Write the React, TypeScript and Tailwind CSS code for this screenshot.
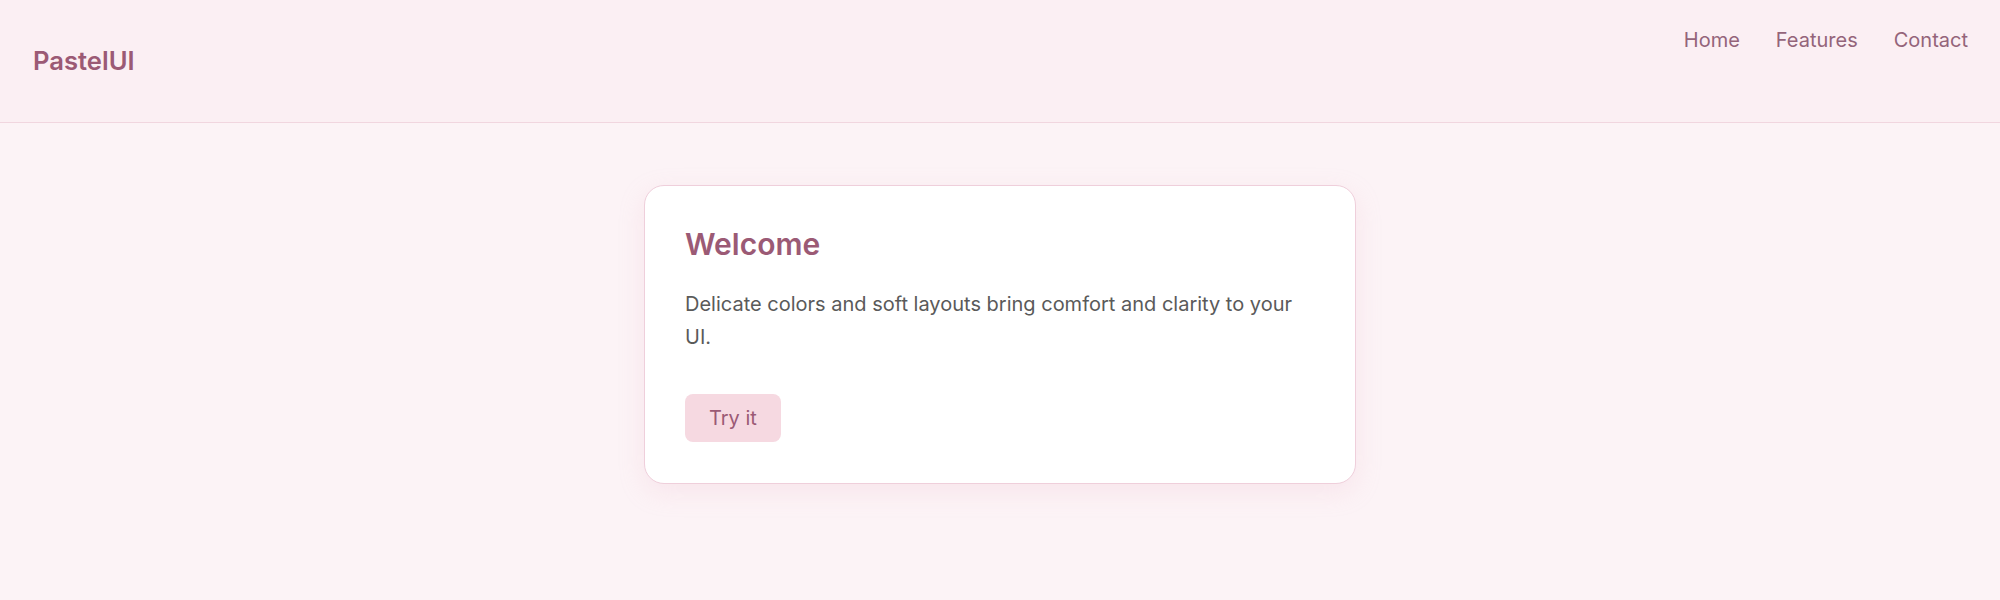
const links = ["Home", "Features", "Contact"];

export default function App() {
  return (
    <div className="min-h-[600px] bg-[#fcf3f6] font-['Inter',sans-serif]">
      <header className="h-[123px] bg-[#fbeff3] border-b border-[#f1d6df] px-8 pt-6 flex items-start justify-between">
        <div className="mt-[19px] pl-px text-[25.6px] leading-9 font-semibold text-[#9b5a75]">PastelUI</div>
        <nav className="mt-px flex gap-9">
          {links.map((l) => (
            <a key={l} href="#" className="text-xl leading-[30px] text-[#94647a]">
              {l}
            </a>
          ))}
        </nav>
      </header>

      <main className="flex justify-center pt-[62px]">
        <div className="w-[712px] bg-white border border-[#efcfdb] rounded-[20px] px-10 pt-10 pb-[41px] shadow-[0_8px_24px_rgba(240,190,208,0.25)]">
          <h1 className="text-3xl leading-9 font-semibold text-[#9b5a75] mb-[26px]">Welcome</h1>
          <p className="text-xl leading-[33px] text-[#5a5a5a]">
            Delicate colors and soft layouts bring comfort and clarity to your UI.
          </p>
          <button className="mt-10 h-12 px-6 rounded-lg bg-[#f6d9e1] text-xl text-[#9b5a75]">Try it</button>
        </div>
      </main>
    </div>
  );
}
